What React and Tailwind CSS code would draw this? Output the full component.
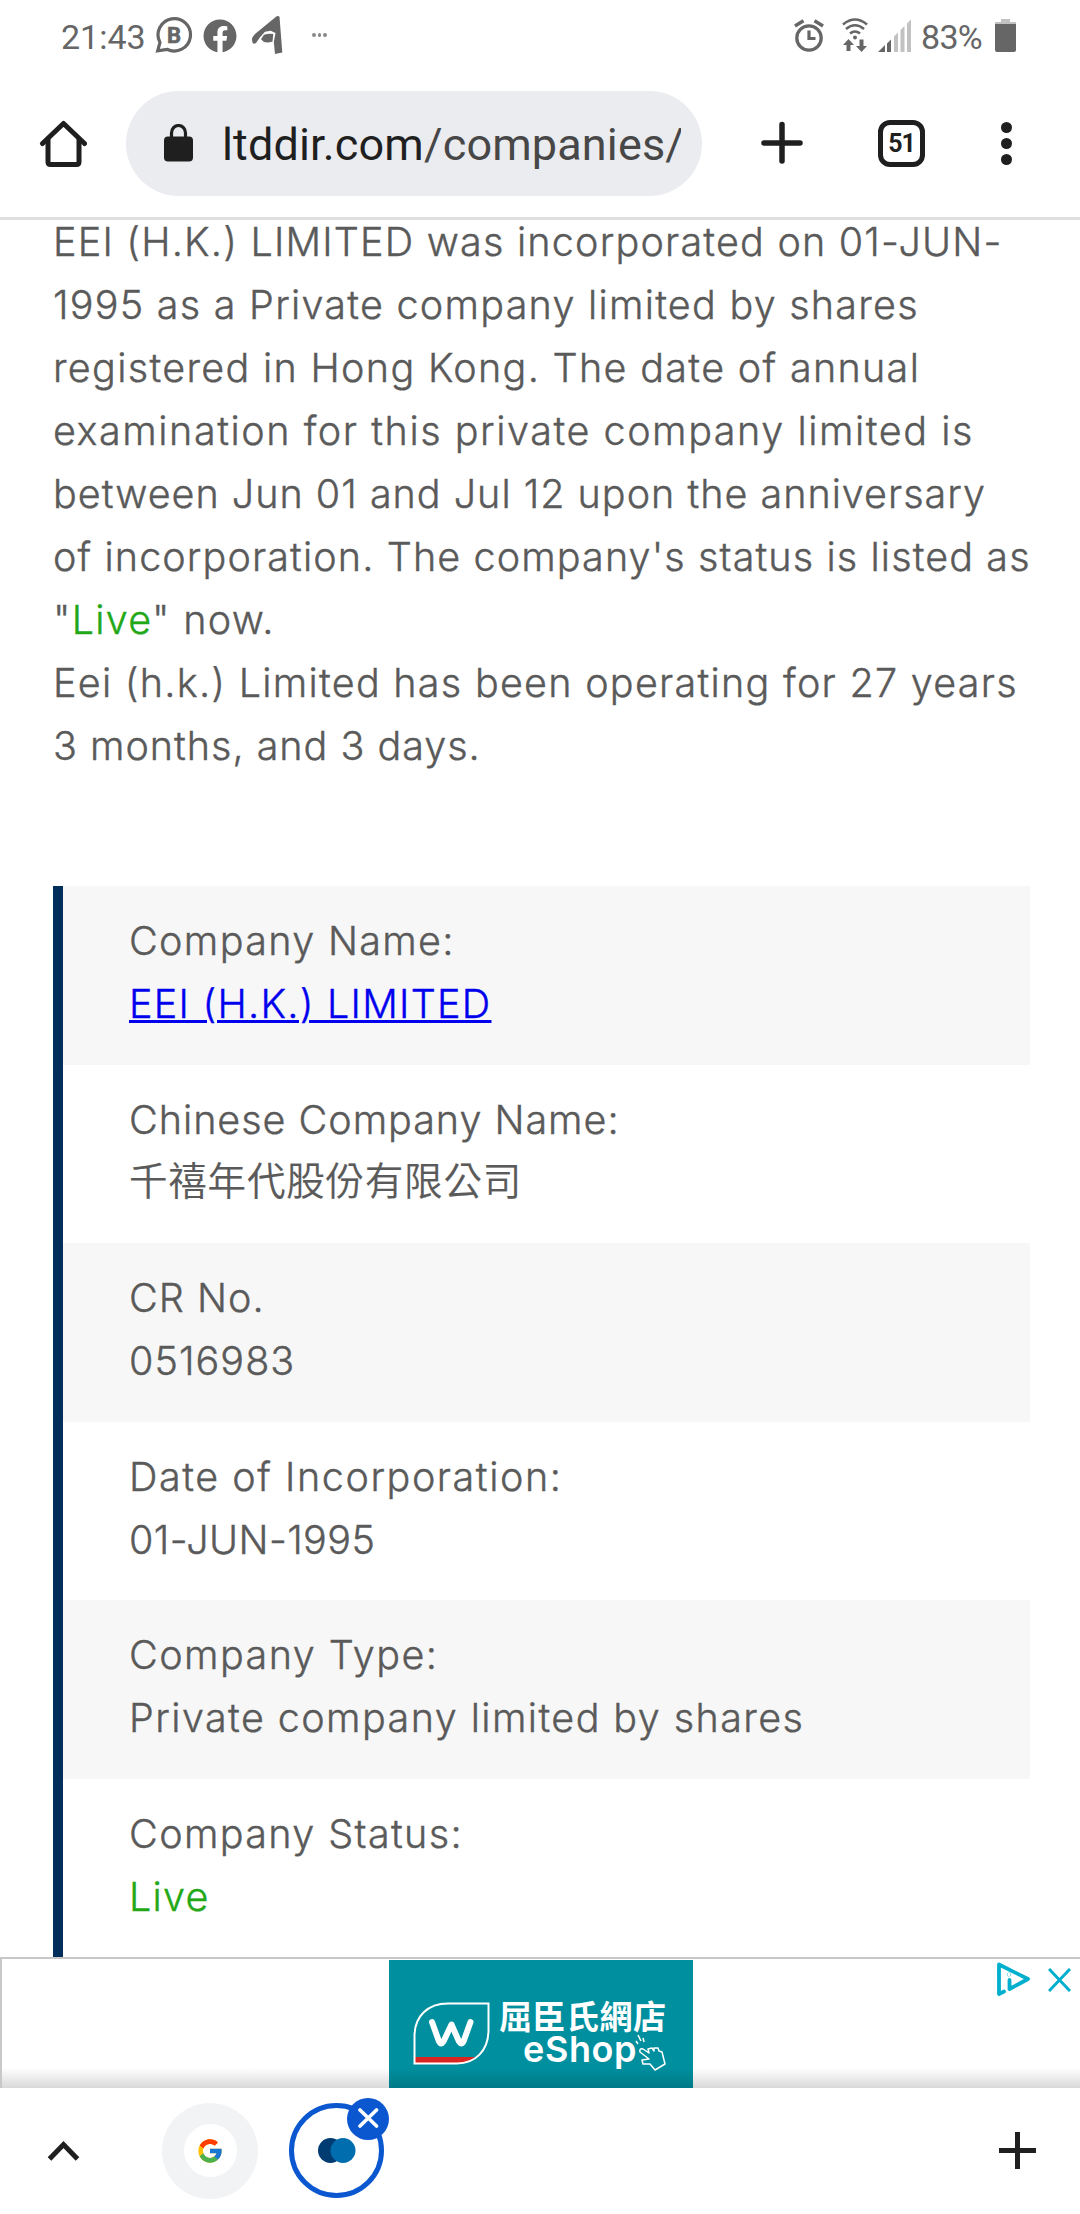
import React from 'react';
import { FaFacebook } from 'react-icons/fa';
import { FcGoogle } from 'react-icons/fc';

const intro = [
  { text: 'EEI (H.K.) LIMITED was incorporated on 01-JUN-', spacing: 'tracking-[1.20px]' },
  { text: '1995 as a Private company limited by shares', spacing: 'tracking-[1.25px]' },
  { text: 'registered in Hong Kong. The date of annual', spacing: 'tracking-[1.32px]' },
  { text: 'examination for this private company limited is', spacing: 'tracking-[1.55px]' },
  { text: 'between Jun 01 and Jul 12 upon the anniversary', spacing: 'tracking-[1.00px]' },
  { text: "of incorporation. The company's status is listed as", spacing: 'tracking-[1.11px]' },
];

const rows = [
  {
    label: 'Company Name:',
    labelSpacing: 'tracking-[1.34px]',
    value: 'EEI (H.K.) LIMITED',
    valueClass: 'tracking-[1.26px] text-[#0000ee] underline decoration-[3px] underline-offset-[2px]',
  },
  {
    label: 'Chinese Company Name:',
    labelSpacing: 'tracking-[0.97px]',
    value: '千禧年代股份有限公司',
    valueClass: "relative top-[-5px] text-[38.5px] tracking-[0.8px] font-['Noto_Sans_CJK_TC',sans-serif] font-[350] [-webkit-text-stroke:0.2px]",
  },
  { label: 'CR No.', labelSpacing: 'tracking-[1.05px]', value: '0516983', valueClass: 'tracking-[1.05px]' },
  { label: 'Date of Incorporation:', labelSpacing: 'tracking-[1.55px]', value: '01-JUN-1995', valueClass: 'tracking-[0.40px]' },
  {
    label: 'Company Type:',
    labelSpacing: 'tracking-[1.44px]',
    value: 'Private company limited by shares',
    valueClass: 'tracking-[1.42px]',
  },
  { label: 'Company Status:', labelSpacing: 'tracking-[1.37px]', value: 'Live', valueClass: 'tracking-[1.30px] text-[#22a816]' },
];

const StatusBar = () => (
  <div className="flex h-[75px] shrink-0 items-start justify-between pl-[61px] pr-[64px] pt-[16px] font-['Roboto',sans-serif] text-[34px] leading-[42px] text-[#666]">
    <div className="flex">
      <span className="w-[94px]">21:43</span>
      {/* business chat bubble */}
      <svg width="38" height="38" viewBox="0 0 38 38" className="block">
        <path d="M5 26.5A16.2 16.2 0 1 1 12 33.3L2.7 34.8Z" fill="none" stroke="#666" strokeWidth="3.2" />
        <text x="12" y="27" fontSize="22" fontWeight="700" fill="#666" stroke="#666" strokeWidth="0.6" fontFamily="Roboto">B</text>
      </svg>
      <FaFacebook className="ml-[10px] mt-[3px] size-[34px]" />
      <svg width="32" height="40" viewBox="0 0 32 40" className="ml-[15px] block" fill="#666">
        <path d="M24 0.7 Q26 -0.5 27.5 0.7 L30.3 36.5 L23 38 L21.8 26 L23.5 17 L18.7 14.7 L13 15.7 L8 21.3 L4 27 Q0 29.5 0 23 Q0.5 20.5 3 18Z" />
        <path d="M9 23.3 L12 18.7 Q17 17 21.3 18 L20.5 25.5 Q16 27.2 12 26Z" />
      </svg>
      <div className="ml-[28px] mt-[17px] flex gap-[2px]">
        <span className="size-[3.5px] rounded-full bg-[#8a8a8a]" />
        <span className="size-[3.5px] rounded-full bg-[#8a8a8a]" />
        <span className="size-[3.5px] rounded-full bg-[#8a8a8a]" />
      </div>
    </div>
    <div className="flex">
      <svg width="30" height="34" viewBox="0 0 30 34" className="mt-[3px] block" fill="none" stroke="#666">
        <circle cx="15" cy="19" r="12.2" strokeWidth="3.3" />
        <path d="M1 7 L9.5 1.8 M29 7 L20.5 1.8" strokeWidth="3.5" />
        <path d="M15 11.5V19.5H21.5" strokeWidth="3.2" />
      </svg>
      <svg width="26" height="35" viewBox="0 0 26 35" className="ml-[18px] mt-[2px] block">
        <g fill="none" stroke="#666" strokeWidth="2.6">
          <path d="M1 6.5 Q13 -3.5 25 6.5" />
          <path d="M4 11 Q13 3.5 22 11" />
          <path d="M8 15.5 Q13 11.5 18 15.5" />
        </g>
        <circle cx="13" cy="19.5" r="2" fill="#666" />
        <path d="M1 27 L6.5 21 L12 27 H8.5 V33 H4.5 V27Z M14 28 H17.5 V21.5 H21.5 V28 H25 L19.5 34Z" fill="#666" />
      </svg>
      <svg width="34" height="34" viewBox="0 0 34 34" className="ml-[10px] mt-[3px] block">
        <path d="M0 33 L7 26 V33Z M9 24.5 L13 20.5 V33 H9Z" fill="#666" />
        <path d="M16 17.5 L20 13.5 V33 H16Z M22.5 11 L26.5 7 V33 H22.5Z M29 4.5 L33 0.5 V33 H29Z" fill="#c2c2c2" />
      </svg>
      <span className="ml-[9px] w-[63px] tracking-[-0.7px]">83%</span>
      <svg width="21" height="34" viewBox="0 0 21 34" className="ml-[11px] mt-[3px] block">
        <path d="M6 0 H15 V3 H21 V6 H0 V3 H6Z" fill="#c2c2c2" />
        <path d="M0 5 H21 V31 Q21 33 19 33 H2 Q0 33 0 31Z" fill="#666" />
      </svg>
    </div>
  </div>
);

const Toolbar = () => (
  <div className="flex h-[145px] shrink-0 items-start border-b-[3px] border-[#dfdfdf] pl-[39px] pt-[16px]">
    <svg width="48" height="50" viewBox="0 0 48 50" className="mt-[28px] block" fill="none" stroke="#1f1f1f" strokeWidth="5" strokeLinecap="round" strokeLinejoin="round">
      <path d="M3.5 24.5 L24.5 4.5 L45.5 24.5" />
      <path d="M9 20 V43 Q9 45.5 11.5 45.5 H37.5 Q40 45.5 40 43 V20" />
    </svg>
    <div className="ml-[39px] flex h-[105px] w-[576px] items-center rounded-full bg-[#ebecf0] pl-[38px]">
      <svg width="29" height="38" viewBox="0 0 29 38" className="mb-[2px] block shrink-0">
        <rect x="0" y="12.5" width="29" height="25" rx="4" fill="#1f1f1f" />
        <path d="M7.5 14 V9 A7 7.5 0 0 1 21.5 9 V14" fill="none" stroke="#1f1f1f" strokeWidth="3.2" />
      </svg>
      <div className="ml-[29px] mt-[3px] w-[459px] overflow-hidden whitespace-nowrap font-['Roboto',sans-serif] text-[45px] leading-[60px] tracking-[0.15px] text-[#474747]">
        <span className="text-[#1f1f1f]">ltddir.com</span>/companies/
      </div>
    </div>
    <svg width="42" height="44" viewBox="0 0 42 44" className="ml-[59px] mt-[30px] block" stroke="#1f1f1f" strokeWidth="5.5" strokeLinecap="round">
      <path d="M21 3.5 V40 M3 22 H39" />
    </svg>
    <div className="ml-[75px] mt-[29px] flex h-[47px] w-[47px] items-center justify-center rounded-[12px] border-[5px] border-[#1f1f1f] font-['Roboto',sans-serif] text-[25px] leading-none font-bold tracking-[-1px] text-[#1f1f1f]">
      51
    </div>
    <div className="ml-[76px] mt-[31px] flex flex-col gap-[5px]">
      <span className="size-[11px] rounded-full bg-[#1f1f1f]" />
      <span className="size-[11px] rounded-full bg-[#1f1f1f]" />
      <span className="size-[11px] rounded-full bg-[#1f1f1f]" />
    </div>
  </div>
);

const CompanyPage = () => (
  <main className="h-[1737px] shrink-0 pl-[53px] pr-[50px] font-['Inter',sans-serif] text-[39.5px] font-light leading-[63px] text-[#5a5a5a] [-webkit-text-stroke:0.4px]">
    <div className="mt-[-9px] whitespace-nowrap">
      {intro.map((line) => (
        <p key={line.text} className={line.spacing}>{line.text}</p>
      ))}
      <p className="tracking-[1.3px]">
        "<span className="text-[#22a816]">Live</span>" now.
      </p>
      <p className="tracking-[1.27px]">Eei (h.k.) Limited has been operating for 27 years</p>
      <p className="tracking-[0.98px]">3 months, and 3 days.</p>
    </div>
    <div className="mt-[108px] border-l-[10px] border-[#002e5b]">
      {rows.map((row) => (
        <div key={row.label} className="h-[178.5px] pl-[66px] pt-[24px] whitespace-nowrap odd:bg-[#f7f7f7]">
          <p className={row.labelSpacing}>{row.label}</p>
          <p className="h-[63px]"><span className={row.valueClass}>{row.value}</span></p>
        </div>
      ))}
    </div>
  </main>
);

const AdBanner = () => (
  <div className="relative flex h-[131px] shrink-0 justify-center overflow-hidden border-t-2 border-l-2 border-[#c8c8c8] pt-px">
    <div className="flex h-full w-[304px] bg-[#008f9e] pl-[24px] pt-[42px] text-white">
      <svg width="78" height="64" viewBox="0 0 78 64" className="block shrink-0">
        <path d="M1.5 55 H62 Q55 61.5 44 61.5 H1.5Z" fill="#d8251f" />
        <path d="M1.5 61.5 V34 C1.5 14 15 1.5 35 1.5 H75.5 V28 C75.5 49 62 61.5 44 61.5Z" fill="none" stroke="#fff" strokeWidth="2" />
        <path d="M19 20 L26 39.5 Q28 43.5 30.5 39.5 L38.5 22.5 L46 39.5 Q48.5 43.5 50.5 39.5 L57.5 20" fill="none" stroke="#fff" strokeWidth="6" strokeLinecap="round" strokeLinejoin="round" />
      </svg>
      <div className="ml-[8px] mt-[-3px] flex flex-col whitespace-nowrap">
        <span className="font-['Noto_Sans_CJK_TC',sans-serif] text-[33px] leading-[32px] font-bold tracking-[0.5px]">屈臣氏網店</span>
        <div className="flex pt-[2px]">
          <span className="ml-[24px] w-[112px] font-['Inter',sans-serif] text-[36px] leading-[32px] font-semibold tracking-[0.6px]">eShop</span>
          <svg width="32" height="38" viewBox="0 0 32 38" className="block shrink-0" fill="none" stroke="#fff" strokeWidth="1.5" strokeLinejoin="round">
            <path d="M1 8 L3 11 M3 2 L6 8 M8 5 L9 9" />
            <path d="M8 31 L7 27 L14 26 L5 19 Q4 15 8 16 L14 20 L13 16 L17 15 L19 18 L19 15 L23 15 L24 18 L27 19 L30 31 L20 37 L15 31Z" />
          </svg>
        </div>
      </div>
    </div>
    <div className="absolute right-[9px] top-[3px] flex items-center gap-[17px]">
      <svg width="35" height="35" viewBox="0 0 35 35" className="block" fill="none" stroke="#00aecd" strokeWidth="3.8" strokeLinecap="round" strokeLinejoin="round">
        <path d="M8 29.5 L3 32 V2.5 L32 17 L13.5 27 V18" />
        <circle cx="13" cy="12.5" r="0.2" />
      </svg>
      <svg width="23" height="24" viewBox="0 0 23 24" className="block" stroke="#00aecd" strokeWidth="3">
        <path d="M1 1 L22 23 M22 1 L1 23" />
      </svg>
    </div>
    <div className="absolute inset-x-0 bottom-0 h-[20px] bg-linear-to-b from-black/0 to-black/15" />
  </div>
);

const TabStrip = () => (
  <div className="flex h-[126px] shrink-0 items-center pb-px pl-[47px] pr-[44px]">
    <svg width="33" height="22" viewBox="0 0 33 22" className="block" fill="none" stroke="#1f1f1f" strokeWidth="5">
      <path d="M2.5 19 L16.5 4.5 L30.5 19" />
    </svg>
    <div className="ml-[82px] flex size-[96px] items-center justify-center rounded-full bg-[#f2f3f5]">
      <div className="flex size-[53px] items-center justify-center rounded-full bg-white">
        <FcGoogle className="size-[28px]" />
      </div>
    </div>
    <div className="relative ml-[31px] flex size-[95px] items-center justify-center rounded-full border-[5px] border-[#0b57d0]">
      <svg width="38" height="25" viewBox="0 0 38 25" className="block">
        <circle cx="12.5" cy="12.5" r="12.5" fill="#003b71" />
        <circle cx="25" cy="12.5" r="12.5" fill="#006dae" />
      </svg>
      <div className="absolute right-[-10px] top-[-10px] flex size-[42px] items-center justify-center rounded-full bg-[#0b57d0]">
        <svg width="22" height="22" viewBox="0 0 22 22" className="mb-[3px] block" stroke="#fff" strokeWidth="3.6" strokeLinecap="round">
          <path d="M3 3 L19.5 19 M19.5 3 L3 19" />
        </svg>
      </div>
    </div>
    <svg width="37" height="37" viewBox="0 0 37 37" className="ml-auto block" stroke="#1f1f1f" strokeWidth="5">
      <path d="M18.5 0 V37 M0 18.5 H37" />
    </svg>
  </div>
);

export default function App() {
  return (
    <div className="flex h-[2214px] w-[1080px] flex-col overflow-hidden bg-white">
      <StatusBar />
      <Toolbar />
      <CompanyPage />
      <AdBanner />
      <TabStrip />
    </div>
  );
}
